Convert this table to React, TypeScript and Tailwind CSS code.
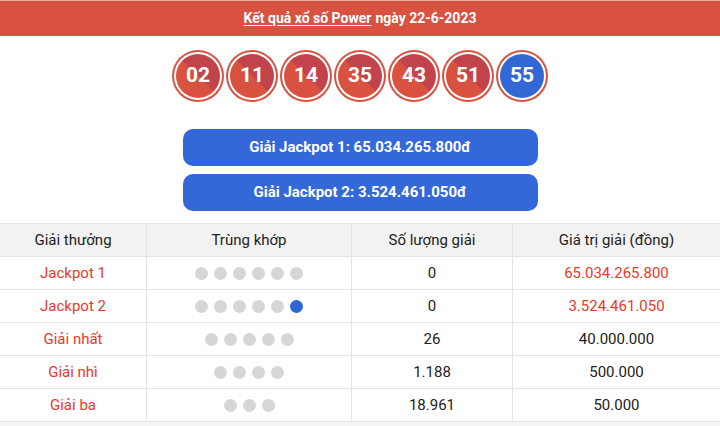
const balls = ["02", "11", "14", "35", "43", "51"];

const rows = [
  { name: "Jackpot 1", gray: 6, blue: false, count: "0", value: "65.034.265.800", hot: true },
  { name: "Jackpot 2", gray: 5, blue: true, count: "0", value: "3.524.461.050", hot: true },
  { name: "Giải nhất", gray: 5, blue: false, count: "26", value: "40.000.000", hot: false },
  { name: "Giải nhì", gray: 4, blue: false, count: "1.188", value: "500.000", hot: false },
  { name: "Giải ba", gray: 3, blue: false, count: "18.961", value: "50.000", hot: false },
];

function Ball({ n, blue }: { n: string; blue?: boolean }) {
  return (
    <div className="w-[52px] h-[52px] rounded-full bg-[#d9513f] p-[2px]">
      <div className="w-full h-full rounded-full bg-white p-[2px]">
        <div
          className={
            blue
              ? "w-full h-full rounded-full bg-[#3367d6] flex items-center justify-center text-white text-[21px] font-bold"
              : "w-full h-full rounded-full bg-[linear-gradient(to_bottom_left,#c2434b_50%,#d9513f_50%)] flex items-center justify-center text-white text-[21px] font-bold"
          }
        >
          {n}
        </div>
      </div>
    </div>
  );
}

function Dots({ gray, blue }: { gray: number; blue: boolean }) {
  return (
    <div className="flex items-center justify-center gap-[6px]">
      {Array.from({ length: gray }).map((_, i) => (
        <span key={i} className="w-[13px] h-[13px] rounded-full bg-[#d6d6d6]" />
      ))}
      {blue && <span className="w-[13px] h-[13px] rounded-full bg-[#2f66d6]" />}
    </div>
  );
}

export default function App() {
  return (
    <main className="w-[720px] h-[426px] bg-white font-['Roboto',sans-serif] overflow-hidden">
      <div className="h-[36px] bg-[#d9513f] border-t border-[#e5b0a8] flex items-center justify-center text-white text-[14px] font-bold">
        <span className="underline underline-offset-2">Kết quả xổ số Power</span>
        <span className="ml-1">ngày 22-6-2023</span>
      </div>

      <div className="flex justify-center gap-[2px] mt-[14px]">
        {balls.map((b) => (
          <Ball key={b} n={b} />
        ))}
        <Ball n="55" blue />
      </div>

      <div className="flex flex-col items-center gap-[8px] mt-[27px]">
        <div className="w-[355px] h-[37px] rounded-[10px] bg-[#3468d9] flex items-center justify-center text-white text-[15px] font-bold">
          Giải Jackpot 1: 65.034.265.800đ
        </div>
        <div className="w-[355px] h-[37px] rounded-[10px] bg-[#3468d9] flex items-center justify-center text-white text-[15px] font-bold">
          Giải Jackpot 2: 3.524.461.050đ
        </div>
      </div>

      <div className="mt-[12px] border-t border-[#e4e4e4]">
        <div className="grid grid-cols-[147px_205px_161px_207px] h-[33px] bg-[#f2f2f2] border-b border-[#e4e4e4] text-[15px] text-[#222]">
          <div className="flex items-center justify-center border-r border-[#e4e4e4]">Giải thưởng</div>
          <div className="flex items-center justify-center border-r border-[#e4e4e4]">Trùng khớp</div>
          <div className="flex items-center justify-center border-r border-[#e4e4e4]">Số lượng giải</div>
          <div className="flex items-center justify-center">Giá trị giải (đồng)</div>
        </div>
        {rows.map((r) => (
          <div
            key={r.name}
            className="grid grid-cols-[147px_205px_161px_207px] h-[33px] border-b border-[#e4e4e4] text-[15px]"
          >
            <div className="flex items-center justify-center border-r border-[#e4e4e4] text-[#e8392b]">{r.name}</div>
            <div className="flex items-center justify-center border-r border-[#e4e4e4]">
              <Dots gray={r.gray} blue={r.blue} />
            </div>
            <div className="flex items-center justify-center border-r border-[#e4e4e4] text-[#222]">{r.count}</div>
            <div className={r.hot ? "flex items-center justify-center text-[#e8392b]" : "flex items-center justify-center text-[#222]"}>
              {r.value}
            </div>
          </div>
        ))}
      </div>
      <div className="h-[10px] bg-[#f5f5f5]" />
    </main>
  );
}
